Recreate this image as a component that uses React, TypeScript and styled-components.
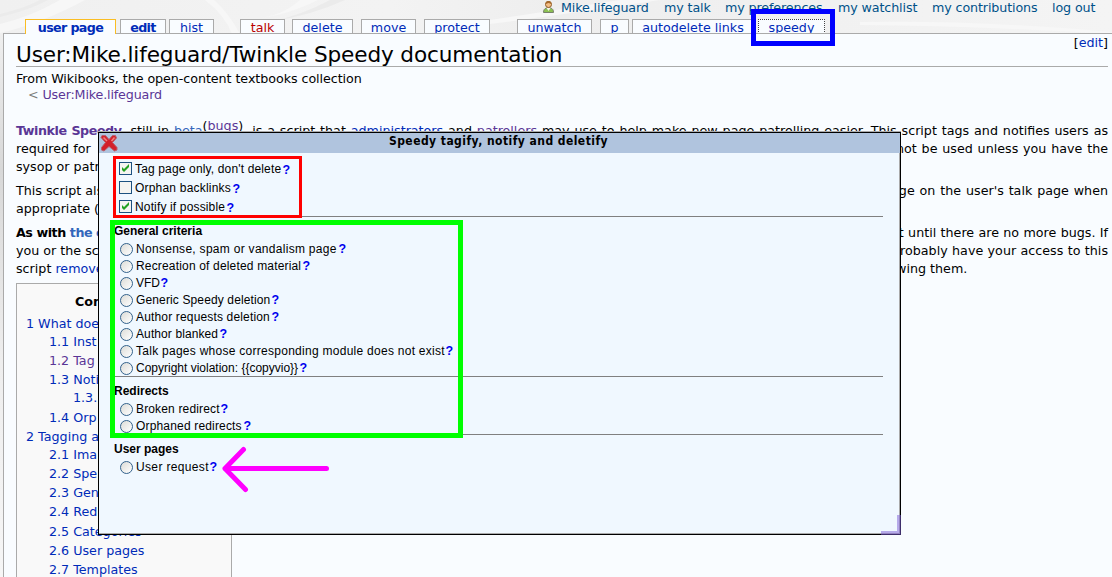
import React from 'react';
import styled, { createGlobalStyle } from 'styled-components';

const Global = createGlobalStyle`
  * { box-sizing: border-box; }
  html, body { margin: 0; height: 577px; overflow: hidden; }
  body { background: #f1f1f1; font: 12.7px/18px "DejaVu Sans", sans-serif; color: #000; }
  b { letter-spacing: -0.45px; }
`;

const Backdrop = styled.svg`
  position: absolute; left: 0; top: 0; z-index: -1;
`;
const Page = styled.div`
  position: relative; width: 1112px; height: 577px; overflow: hidden;
  display: flex; flex-direction: column; isolation: isolate;
`;
const Personal = styled.nav`
  height: 19px; flex: none; display: flex; padding-left: 542px; line-height: 16px;
  color: #005189; white-space: nowrap; letter-spacing: -0.12px;
`;
const PersonalItem = styled.span<{ $w: number }>`
  width: ${p => p.$w}px; flex: none;
`;
const Tabs = styled.nav`
  height: 15px; flex: none; display: flex; padding-left: 25px; white-space: nowrap;
`;
const Tab = styled.a<{ $w: number; $gap: number; $active?: boolean; $new?: boolean; $bold?: boolean; $focus?: boolean }>`
  width: ${p => p.$w}px; margin-left: ${p => p.$gap}px; height: 15px;
  flex: none; text-align: center; line-height: 16px;
  background: #f9fcff; border: 1px ${p => (p.$focus ? 'dotted' : 'solid')}; border-bottom: 0;
  border-color: ${p => (p.$active ? '#fabd23' : p.$focus ? '#444' : '#aaa')};
  color: ${p => (p.$new ? '#ba0000' : '#002bb8')};
  font-weight: ${p => (p.$bold ? 700 : 400)}; letter-spacing: ${p => (p.$bold ? -0.65 : 0)}px;
  ${p => p.$active && 'position: relative; z-index: 2;'}
`;
const Content = styled.main`
  position: relative; z-index: 1; margin: -1px 0 0 3px; height: 544px; flex: none;
  border: 1px solid #aaa; border-right: 0; border-bottom: 0;
  background: #f9fcff; padding: 0 4px 0 12px;
`;
const TitleRow = styled.header`
  display: flex; justify-content: space-between; height: 33px; border-bottom: 1px solid #aaa;
`;
const Title = styled.h1`
  margin: 0; font-size: 21.6px; line-height: 41px; font-weight: 400; white-space: nowrap; letter-spacing: -0.12px;
`;
const EditSection = styled.span`line-height: 18px;`;
const Sub = styled.div`line-height: 16px; padding-top: 4px; white-space: nowrap; letter-spacing: -0.06px;`;
const Crumb = styled.div`line-height: 16px; padding-left: 12px; color: #7d7d7d; letter-spacing: -0.15px;`;
const Article = styled.section`padding-top: 19px;`;
const Para = styled.div`margin-bottom: 6px;`;
const Line = styled.div`
  display: flex; justify-content: space-between; height: 18px; white-space: nowrap;
`;
const Full = styled.div`
  height: 18px; width: 1092px; text-align: justify; text-align-last: justify; white-space: nowrap;
`;
const Piece = styled.span<{ $w?: number; $start?: boolean }>`
  width: ${p => (p.$w ? p.$w + 'px' : 'auto')};
  text-align-last: ${p => (p.$w && !p.$start ? 'justify' : 'left')};
`;
const Link = styled.a<{ $c?: string }>`color: ${p => p.$c ?? '#002bb8'};`;
const Sup = styled.sup`font-size: 12.7px; line-height: 0; vertical-align: 5px;`;
const Toc = styled.aside`
  width: 216px; height: 320px; margin-top: -1px; border: 1px solid #aaa; background: #f9f9f9;
  padding: 9px 0 0 9px; white-space: nowrap;
`;
const TocTitle = styled.div`font-weight: 700; padding-left: 49px; height: 22px;`;
const TocRow = styled.div<{ $level: number; $h?: number; $visited?: boolean }>`
  padding-left: ${p => [0, 0, 23, 47][p.$level]}px; height: ${p => p.$h ?? 19}px;
  color: ${p => (p.$visited ? '#5a3696' : '#002bb8')};
`;

const Dialog = styled.section`
  position: absolute; z-index: 2; left: 98px; top: 132px; width: 803px; height: 403px;
  border: 1px solid #000; box-shadow: inset -1px -1px #aaa, 0 -1px #aaa;
  background: #f0f8ff; font: 12px/14px "Liberation Sans", Arial, sans-serif;
`;
const DialogBar = styled.header`
  height: 20px; background: #b0c4de; display: flex; align-items: flex-start;
`;
const DialogTitle = styled.h2`
  margin: 0; flex: 1; text-align: center; letter-spacing: 0.45px;
  font: 700 12px/16px "DejaVu Sans Condensed", "DejaVu Sans", sans-serif;
  padding-right: 22px;
`;
const Close = styled.svg`width: 20px; height: 20px; flex: none;`;
const Form = styled.div`padding: 8px 17px 0 15px;`;
const Group = styled.div<{ $h: number; $top?: number; $rule?: boolean }>`
  height: ${p => p.$h}px; padding-top: ${p => p.$top ?? 7}px;
  border-bottom: ${p => (p.$rule ? '1px solid #808080' : '0')};
`;
const GroupTitle = styled.h3`
  margin: 0; font-size: 12px; line-height: 14px; height: 17px;
`;
const Option = styled.label<{ $h: number; $left: number }>`
  display: flex; align-items: flex-start; height: ${p => p.$h}px; padding-left: ${p => p.$left}px; white-space: nowrap;
`;
const Label = styled.span<{ $w: number; $ls: number }>`
  width: ${p => p.$w}px; margin-left: 3px; flex: none; letter-spacing: ${p => p.$ls}px; line-height: 17px;
`;
const Help = styled.b<{ $low?: boolean }>`
  color: #0000ee; line-height: ${p => (p.$low ? 18 : 16)}px; font-size: 12.5px; letter-spacing: 0; margin-left: -0.5px;
`;
const Check = styled.svg`width: 13px; height: 13px; flex: none; margin-top: 1px;`;
const Radio = styled.i`
  width: 13px; height: 13px; flex: none; margin-top: 2px; border: 1px solid #33628c; border-radius: 50%;
  background: linear-gradient(135deg, #dcdcd7, #fff);
`;
const Marks = styled.svg`position: absolute; left: 0; top: 0; z-index: 3;`;

type Choice = readonly [text: string, width: number, spacing: number];

const toggles: readonly (readonly [...Choice, boolean])[] = [
  ["Tag page only, don't delete", 148, 0.15, true],
  ['Orphan backlinks', 98, 0.2, false],
  ['Notify if possible', 92, 0.15, true],
];
const general: readonly Choice[] = [
  ['Nonsense, spam or vandalism page', 203, 0.29],
  ['Recreation of deleted material', 167, 0.17],
  ['VFD', 25, 0],
  ['Generic Speedy deletion', 136, 0.13],
  ['Author requests deletion', 136, 0.16],
  ['Author blanked', 84, 0.1],
  ['Talk pages whose corresponding module does not exist', 310, 0.27],
  ['Copyright violation: {{copyvio}}', 164, 0],
];
const redirects: readonly Choice[] = [
  ['Broken redirect', 85, 0.15],
  ['Orphaned redirects', 108, 0.17],
];
const userPages: readonly Choice[] = [['User request', 74, 0.35]];

const Radios = ({ items }: { items: readonly Choice[] }) => (
  <>{items.map(([text, width, spacing]) => (
    <Option key={text} $h={17} $left={6}>
      <Radio /><Label $w={width} $ls={spacing}>{text}</Label><Help>?</Help>
    </Option>
  ))}</>
);

export default function App() {
  return (
    <Page>
      <Global />
      <Backdrop width="1112" height="577">
        <defs>
          <linearGradient id="paper" x1="0" y1="0" x2="1" y2="0">
            <stop offset="0" stopColor="#f0f0f0" /><stop offset=".35" stopColor="#f3f3f3" />
            <stop offset=".5" stopColor="#eeeeee" /><stop offset="1" stopColor="#f4f4f4" />
          </linearGradient>
          <linearGradient id="edge" x1="0" y1="0" x2="0" y2="1">
            <stop offset="0" stopColor="#efefef" /><stop offset=".25" stopColor="#d8d8d8" /><stop offset=".6" stopColor="#eee" /><stop offset="1" stopColor="#f6f6f6" />
          </linearGradient>
        </defs>
        <path d="M0 0h1112v34H0z" fill="url(#paper)" />
        <path d="M0 34h3v543H0z" fill="url(#edge)" />
        <path d="M0 24Q30 17 60 0H85Q40 24 0 33zM205 0Q225 15 232 34H240Q228 12 214 0zM300 0Q285 14 262 18Q290 14 318 0zM490 20Q570 8 620 0H660Q560 15 490 24zM860 22Q980 20 1112 32V34Q980 26 860 25z" fill="#f7f7f7" />
        <path d="M40 0Q25 8 0 14V17Q30 10 48 0zM330 0Q300 16 272 21Q310 16 345 0z" fill="#ebebeb" />
      </Backdrop>
      <Personal>
        <svg width="19" height="16" viewBox="0 0 19 16">
          <path d="M1.500 12.500c0-2.500 1-4 3-4.500h4c2 .5 3 2 3 4.500z" fill="#8cc152" stroke="#77806c" />
          <path d="M4.500 8h4l-2 3z" fill="#f5f5ee" />
          <circle cx="6.500" cy="4.500" r="3" fill="#f4bd86" stroke="#8f5b25" />
          <path d="M3.500 4a3 3 0 0 1 6 0l-3-1z" fill="#a5692b" />
        </svg>
        <PersonalItem $w={103}>Mike.lifeguard</PersonalItem>
        <PersonalItem $w={61}>my talk</PersonalItem>
        <PersonalItem $w={113}>my preferences</PersonalItem>
        <PersonalItem $w={94}>my watchlist</PersonalItem>
        <PersonalItem $w={120}>my contributions</PersonalItem>
        <PersonalItem $w={50}>log out</PersonalItem>
      </Personal>
      <Tabs>
        <Tab $w={91} $gap={0} $active $bold>user page</Tab>
        <Tab $w={46} $gap={4} $bold>edit</Tab>
        <Tab $w={45} $gap={3}>hist</Tab>
        <Tab $w={45} $gap={26} $new>talk</Tab>
        <Tab $w={61} $gap={7}>delete</Tab>
        <Tab $w={55} $gap={8}>move</Tab>
        <Tab $w={66} $gap={8}>protect</Tab>
        <Tab $w={75} $gap={27}>unwatch</Tab>
        <Tab $w={29} $gap={8}>p</Tab>
        <Tab $w={122} $gap={3}>autodelete links</Tab>
        <Tab $w={67} $gap={4} $focus>speedy</Tab>
      </Tabs>
      <Content>
        <TitleRow>
          <Title>User:Mike.lifeguard/Twinkle Speedy documentation</Title>
          <EditSection>[<Link>edit</Link>]</EditSection>
        </TitleRow>
        <Sub>From Wikibooks, the open-content textbooks collection</Sub>
        <Crumb>&lt; <Link $c="#5a3696">User:Mike.lifeguard</Link></Crumb>
        <Article>
          <Para>
            <Full><b><Link $c="#5a3696">Twinkle Speedy</Link></b>, still in <Link $c="#3366bb">beta</Link><Sup>(<Link $c="#5a3696">bugs</Link>)</Sup>, is a script that <Link>administrators</Link> and <Link $c="#5a3696">patrollers</Link> may use to help make new page patrolling easier. This script tags and notifies users as</Full>
            <Line><Piece>required for</Piece><Piece $w={212}>not be used unless you have the</Piece></Line>
            <Line><Piece>sysop or patroller</Piece></Line>
          </Para>
          <Para>
            <Line><Piece>This script also</Piece><Piece $w={225}>page on the user's talk page when</Piece></Line>
            <Line><Piece>appropriate (</Piece></Line>
          </Para>
          <Para>
            <Line><Piece><b>As with <Link $c="#3366bb">the o</Link></b></Piece><Piece $w={225}>not until there are no more bugs. If</Piece></Line>
            <Line><Piece>you or the sc</Piece><Piece $w={216}>probably have your access to this</Piece></Line>
            <Line><Piece>script <Link>removed</Link></Piece><Piece $w={239} $start>following them.</Piece></Line>
          </Para>
          <Toc>
            <TocTitle>Contents</TocTitle>
            <TocRow $level={1} $h={18}>1 What does</TocRow>
            <TocRow $level={2}>1.1 Inst</TocRow>
            <TocRow $level={2} $visited>1.2 Tag</TocRow>
            <TocRow $level={2} $h={18}>1.3 Noti</TocRow>
            <TocRow $level={3} $h={20}>1.3.1</TocRow>
            <TocRow $level={2}>1.4 Orp</TocRow>
            <TocRow $level={1} $h={18}>2 Tagging a</TocRow>
            <TocRow $level={2}>2.1 Ima</TocRow>
            <TocRow $level={2}>2.2 Spe</TocRow>
            <TocRow $level={2}>2.3 Gen</TocRow>
            <TocRow $level={2} $h={20}>2.4 Red</TocRow>
            <TocRow $level={2}>2.5 Categories</TocRow>
            <TocRow $level={2}>2.6 User pages</TocRow>
            <TocRow $level={2}>2.7 Templates</TocRow>
          </Toc>
        </Article>
      </Content>
      <Dialog>
        <DialogBar>
          <Close viewBox="0 0 20 20">
            <path d="M3 2.500H6.500L10 6.500L13.500 2.500H16.500L17.500 5L13.500 9.500L18 14.500V17L15.500 18L10 13.500L5 18L2.500 17V14.500L6.500 9.500L2 4.500z" fill="#d3202a" stroke="#b9606c" strokeLinejoin="round" />
            <path d="M4.500 4.500L8 8M15.500 4.500L12.500 8" fill="none" stroke="#f58080" strokeWidth="1.500" />
          </Close>
          <DialogTitle>Speedy tagify, notify and deletify</DialogTitle>
        </DialogBar>
        <Form>
          <Group $h={56} $top={0} $rule>
            {toggles.map(([text, width, spacing, on]) => (
              <Option key={text} $h={19} $left={5}>
                <Check viewBox="0 0 13 13">
                  <rect x=".5" y=".5" width="12" height="12" fill="#f4f4f1" stroke="#1c5180" />
                  {on && <path d="M3 5v3l2 2 5-5V2L5 7z" fill="#21a121" />}
                </Check>
                <Label $w={width} $ls={spacing}>{text}</Label><Help $low>?</Help>
              </Option>
            ))}
          </Group>
          <Group $h={160} $rule><GroupTitle>General criteria</GroupTitle><Radios items={general} /></Group>
          <Group $h={58} $rule><GroupTitle>Redirects</GroupTitle><Radios items={redirects} /></Group>
          <Group $h={60}><GroupTitle>User pages</GroupTitle><Radios items={userPages} /></Group>
        </Form>
      </Dialog>
      <Marks width="1112" height="577" fill="none">
        <path d="M753.5 11.5h79v32h-79z" stroke="#00f" strokeWidth="5" />
        <path d="M114.5 157.5h186v59h-186z" stroke="red" strokeWidth="3" />
        <path d="M112.5 222.5h348v213h-348z" stroke="#0f0" strokeWidth="5" />
        <path d="M326.500 468.500H225M243.500 449.500L225 468.500L245.500 489.500" stroke="#f0f" strokeWidth="5" strokeLinecap="round" strokeLinejoin="round" />
        <path d="M897 515h4v20h-20v-4h16z" fill="#7b5cd6" fillOpacity=".5" />
      </Marks>
    </Page>
  );
}
